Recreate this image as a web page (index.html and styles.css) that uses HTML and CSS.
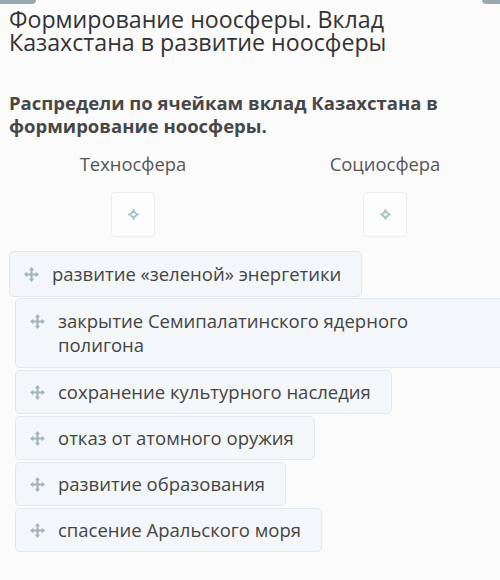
FILE: index.html
```html
<!DOCTYPE html>
<html lang="ru">
<head>
  <meta charset="UTF-8"/>
  <title>Формирование ноосферы</title>
  <link rel="stylesheet" href="styles.css">
</head>
<body>
  <div class="topbar">
    <span class="tab tab-left"></span>
    <span class="tab tab-right"></span>
  </div>

  <h1 class="title">Формирование ноосферы. Вклад Казахстана в развитие ноосферы</h1>

  <h2 class="question">Распредели по ячейкам вклад Казахстана в формирование ноосферы.</h2>

  <div class="columns">
    <div class="column">
      <div class="column-title">Техносфера</div>
      <div class="drop-box">
        <svg viewBox="0 0 14 14" width="13" height="13"><path d="M7 1v2.5M7 10.5V13M1 7h2.5M10.5 7H13" stroke="#a7c3cc" stroke-width="1.6"/><path d="M7 3.2 10.8 7 7 10.8 3.2 7Z" fill="none" stroke="#a7c3cc" stroke-width="2" stroke-linejoin="round"/></svg>
      </div>
    </div>
    <div class="column">
      <div class="column-title">Социосфера</div>
      <div class="drop-box">
        <svg viewBox="0 0 14 14" width="13" height="13"><path d="M7 1v2.5M7 10.5V13M1 7h2.5M10.5 7H13" stroke="#a7c3cc" stroke-width="1.6"/><path d="M7 3.2 10.8 7 7 10.8 3.2 7Z" fill="none" stroke="#a7c3cc" stroke-width="2" stroke-linejoin="round"/></svg>
      </div>
    </div>
  </div>

  <div class="cards">
    <div class="card first"><svg class="move" viewBox="0 0 16 16"><path d="M8 1 10.5 4H5.5ZM8 15 5.5 12h5ZM1 8 4 5.5v5ZM15 8 12 10.5v-5Z"/><rect x="7" y="3" width="2" height="10"/><rect x="3" y="7" width="10" height="2"/></svg><span>развитие «зеленой» энергетики</span></div>
    <div class="card wide"><svg class="move" viewBox="0 0 16 16"><path d="M8 1 10.5 4H5.5ZM8 15 5.5 12h5ZM1 8 4 5.5v5ZM15 8 12 10.5v-5Z"/><rect x="7" y="3" width="2" height="10"/><rect x="3" y="7" width="10" height="2"/></svg><span>закрытие Семипалатинского ядерного полигона</span></div>
    <div class="card"><svg class="move" viewBox="0 0 16 16"><path d="M8 1 10.5 4H5.5ZM8 15 5.5 12h5ZM1 8 4 5.5v5ZM15 8 12 10.5v-5Z"/><rect x="7" y="3" width="2" height="10"/><rect x="3" y="7" width="10" height="2"/></svg><span>сохранение культурного наследия</span></div>
    <div class="card"><svg class="move" viewBox="0 0 16 16"><path d="M8 1 10.5 4H5.5ZM8 15 5.5 12h5ZM1 8 4 5.5v5ZM15 8 12 10.5v-5Z"/><rect x="7" y="3" width="2" height="10"/><rect x="3" y="7" width="10" height="2"/></svg><span>отказ от атомного оружия</span></div>
    <div class="card"><svg class="move" viewBox="0 0 16 16"><path d="M8 1 10.5 4H5.5ZM8 15 5.5 12h5ZM1 8 4 5.5v5ZM15 8 12 10.5v-5Z"/><rect x="7" y="3" width="2" height="10"/><rect x="3" y="7" width="10" height="2"/></svg><span>развитие образования</span></div>
    <div class="card"><svg class="move" viewBox="0 0 16 16"><path d="M8 1 10.5 4H5.5ZM8 15 5.5 12h5ZM1 8 4 5.5v5ZM15 8 12 10.5v-5Z"/><rect x="7" y="3" width="2" height="10"/><rect x="3" y="7" width="10" height="2"/></svg><span>спасение Аральского моря</span></div>
  </div>
</body>
</html>
```

FILE: styles.css
```css
* { margin:0; padding:0; box-sizing:border-box; }
html, body {
  height:100%; overflow:hidden;
  font-family:'Open Sans','Noto Sans',sans-serif;
  background:#fbfbfb; color:#3a3a3a;
}
body { padding:0 0 0 9px; }

/* ─── TOP ───────────────────────── */
.topbar {
  display:flex; justify-content:space-between;
  height:5px; margin-left:-9px;
}
.tab {
  display:block; height:4px; background:#9aa9b1;
  border-radius:0 0 6px 0;
}
.tab-left { width:36px; }
.tab-right { width:18px; border-radius:0 0 0 8px; }

/* ─── HEADINGS ──────────────────── */
.title {
  font-size:23.2px; font-weight:400;
  line-height:23px; color:#333;
  width:400px; margin-top:3px;
}
.question {
  font-size:18.5px; font-weight:700;
  line-height:23px; color:#474747;
  width:470px; margin-top:37px;
}

/* ─── COLUMNS ───────────────────── */
.columns {
  display:grid; grid-template-columns:252px 252px;
  margin:15px 0 0 -2px;
}
.column {
  display:flex; flex-direction:column; align-items:center;
}
.column-title {
  font-size:18.4px; color:#555; line-height:24px;
}
.drop-box {
  width:44px; height:45px; margin-top:16px;
  border:1px solid #eeeeee; border-radius:4px;
  background:#fdfdfd;
  display:flex; align-items:center; justify-content:center;
}

/* ─── CARDS ─────────────────────── */
.cards {
  display:flex; flex-direction:column; align-items:flex-start;
  margin-top:14px; gap:2px;
}
.card {
  display:flex; align-items:flex-start; gap:12px;
  padding:9px 20px 9px 13px; margin-left:6px;
  background:#f4f7f9; border:1px solid #e1e7eb; border-radius:5px;
  font-size:18.5px; line-height:24px; color:#444;
}
.card.first { margin-left:0; padding-top:10px; padding-bottom:10px; margin-bottom:-1px; }
.card.wide { width:500px; padding-top:10px; padding-bottom:10px; }
.card.wide span { max-width:360px; }
.move {
  width:17px; height:17px; flex:none; margin-top:4px;
  fill:#a3b4bb;
}
```
